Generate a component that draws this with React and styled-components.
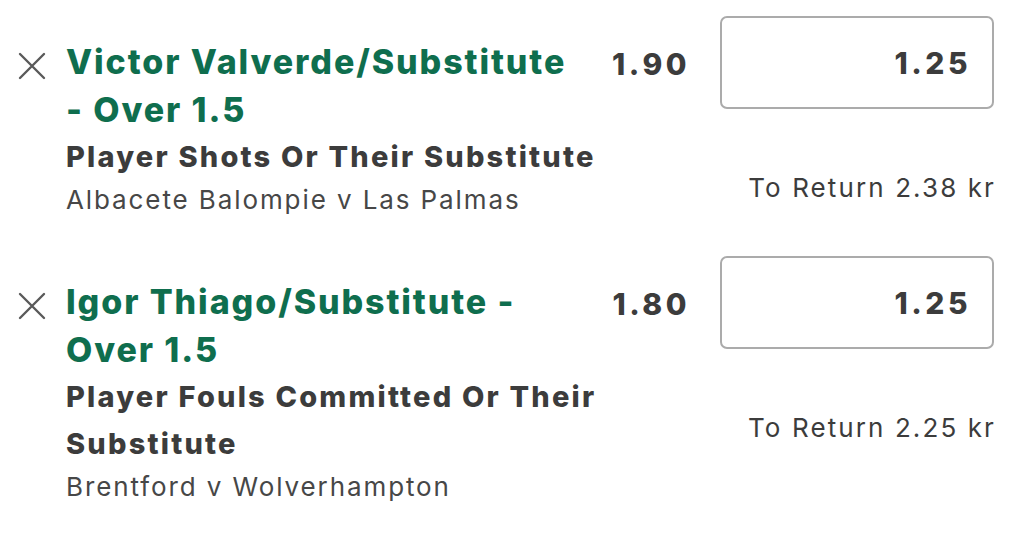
import React from "react";
import styled, { createGlobalStyle } from "styled-components";

const GlobalStyle = createGlobalStyle`
    html, body {
        margin: 0;
        padding: 0;
        background: #ffffff;
    }
    body {
        font-family: Inter, "Noto Sans", "Liberation Sans", sans-serif;
        -webkit-font-smoothing: antialiased;
    }
`;

const bets = [
    {
        id: 1,
        selection: "Victor Valverde/Substitute - Over 1.5",
        market: "Player Shots Or Their Substitute",
        event: "Albacete Balompie v Las Palmas",
        odds: "1.90",
        stake: "1.25",
        toReturn: "2.38 kr",
    },
    {
        id: 2,
        selection: "Igor Thiago/Substitute - Over 1.5",
        market: "Player Fouls Committed Or Their Substitute",
        event: "Brentford v Wolverhampton",
        odds: "1.80",
        stake: "1.25",
        toReturn: "2.25 kr",
    },
];

function CloseIcon() {
    return (
        <svg width="28" height="28" viewBox="0 0 28 28" fill="none">
            <path d="M2 2 L26 26 M26 2 L2 26" stroke="#5a5a5a" strokeWidth="2.4" strokeLinecap="round" />
        </svg>
    );
}

function App() {
    return (
        <React.Fragment>
            <GlobalStyle />
            <Slip>
                {bets.map((bet) => (
                    <Row key={bet.id}>
                        <Remove type="button" aria-label="Remove">
                            <CloseIcon />
                        </Remove>
                        <Info>
                            <Selection>{bet.selection}</Selection>
                            <Market>{bet.market}</Market>
                            <Event>{bet.event}</Event>
                        </Info>
                        <Odds>{bet.odds}</Odds>
                        <Stake>
                            <StakeBox>{bet.stake}</StakeBox>
                            <Return>To Return {bet.toReturn}</Return>
                        </Stake>
                    </Row>
                ))}
            </Slip>
        </React.Fragment>
    );
}

export default App;

const Slip = styled.div`
    display: flex;
    flex-direction: column;
    gap: 36px;
    padding: 16px 23px 0 18px;
`;

const Row = styled.div`
    display: grid;
    grid-template-columns: 48px 545px 1fr 274px;
    align-items: start;
`;

const Remove = styled.button`
    border: none;
    background: none;
    padding: 0;
    margin-top: 36px;
    width: 28px;
    height: 28px;
    cursor: pointer;
`;

const Info = styled.div`
    display: flex;
    flex-direction: column;
    padding-top: 22px;
`;

const Selection = styled.div`
    font-size: 34px;
    font-weight: 800;
    line-height: 48px;
    color: #0f6e4e;
    letter-spacing: 1.9px;
    max-width: 515px;
`;

const Market = styled.div`
    font-size: 29px;
    font-weight: 800;
    line-height: 47px;
    color: #3c3c3c;
    letter-spacing: 2.2px;
    margin-top: -1px;
`;

const Event = styled.div`
    font-size: 26px;
    font-weight: 400;
    line-height: 40px;
    color: #474747;
    letter-spacing: 1.9px;
`;

const Odds = styled.div`
    font-size: 30px;
    font-weight: 800;
    line-height: 48px;
    color: #3c3c3c;
    letter-spacing: 3.5px;
    text-align: right;
    padding-top: 24px;
    padding-right: 30px;
`;

const Stake = styled.div`
    display: flex;
    flex-direction: column;
    align-items: flex-end;
`;

const StakeBox = styled.div`
    box-sizing: border-box;
    width: 274px;
    height: 93px;
    border: 2px solid #ababab;
    border-radius: 7px;
    display: flex;
    align-items: center;
    justify-content: flex-end;
    padding-right: 21px;
    font-size: 30px;
    font-weight: 800;
    color: #3c3c3c;
    letter-spacing: 3.5px;
`;

const Return = styled.div`
    margin-top: 62px;
    font-size: 26px;
    font-weight: 400;
    color: #3c3c3c;
    line-height: 34px;
    letter-spacing: 2.1px;
    margin-right: -2px;
`;
